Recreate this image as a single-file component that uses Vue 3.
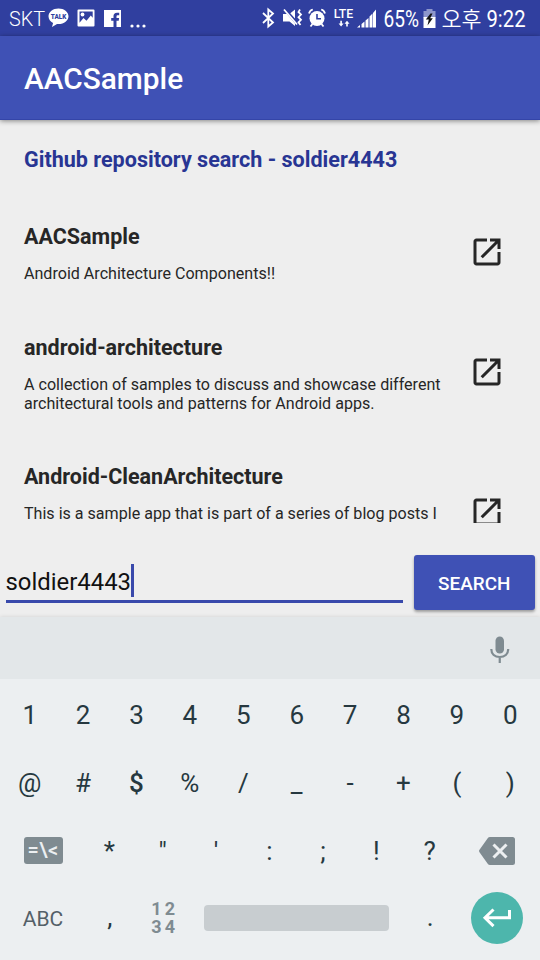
<script setup>
import { ref } from 'vue'

const query = ref('soldier4443')
const repos = [
  { name: 'AACSample', lines: ['Android Architecture Components!!'], size: 'one' },
  {
    name: 'android-architecture',
    lines: ['A collection of samples to discuss and showcase different', 'architectural tools and patterns for Android apps.'],
    size: 'two',
  },
  { name: 'Android-CleanArchitecture', lines: ['This is a sample app that is part of a series of blog posts I'], size: 'three' },
]
const digits = ['1', '2', '3', '4', '5', '6', '7', '8', '9', '0']
const symbols = ['@', '#', '$', '%', '/', '_', '-', '+', '(', ')']
const marks = ['*', '"', "'", ':', ';', '!', '?']
</script>

<template>
  <div class="screen">
    <header class="status">
      <svg class="carrier" width="38" height="36"><text x="0" y="25.5" font-size="21" textLength="36" lengthAdjust="spacingAndGlyphs">SKT</text></svg>
      <svg class="talk" width="21" height="20" viewBox="0 0 21 20">
        <path fill="#fff" d="M10.500 .5C4.900.5.500 4 .500 8.300c0 2.900 1.800 5.300 4.600 6.700L4 19l5-3 1.500.1c5.600 0 10-3.500 10-7.800S16.100.5 10.500.5z" />
        <text x="2.800" y="11.200" font-size="7.500" textLength="15.500" lengthAdjust="spacingAndGlyphs">TALK</text>
      </svg>
      <svg class="photo" width="18" height="18" viewBox="0 0 18 18">
        <path fill="#fff" fill-rule="evenodd" d="M1.500.5h15a1 1 0 0 1 1 1v15a1 1 0 0 1-1 1h-15a1 1 0 0 1-1-1v-15a1 1 0 0 1 1-1zM2.500 2.500v11.300L6.500 9l3 2.800 4.300-5.300 1.900 2.200V2.500z" />
        <circle cx="5.500" cy="5.500" r="1.900" fill="#fff" />
      </svg>
      <svg class="facebook" width="17" height="17" viewBox="0 0 17 17">
        <path fill="#fff" d="M0 0h17v17h-4.500v-6.300h2.200l.4-2.700h-2.600V6.400c0-.8.4-1.200 1.300-1.200h1.400V2.700h-2.200C10.700 2.700 9.500 4 9.500 6v2H7.200v2.700h2.300V17H0z" />
      </svg>
      <svg class="dots" width="16" height="4" viewBox="0 0 16 4"><g fill="#fff"><circle cx="2" cy="2" r="1.600" /><circle cx="8" cy="2" r="1.600" /><circle cx="14" cy="2" r="1.600" /></g></svg>
      <svg class="bluetooth" width="13" height="20" viewBox="0 0 13 20">
        <path fill="none" stroke="#fff" stroke-width="1.800" d="M1 5l10 9.500-4.700 4V1.500l4.700 4L1 15" />
      </svg>
      <svg class="mute" width="20" height="20" viewBox="0 0 20 20">
        <path fill="#fff" d="M0 6h4l8 9.500V18L6.500 13.500H0zM12 1.500v9L7.300 5.300z" />
        <path fill="none" stroke="#fff" stroke-width="1.800" d="M1 1.500l13 15M17 1.500l-1.500 2.500 2.500 2.500-2.500 2.700 2.500 2.600-2.500 2.600 2 2.600" />
      </svg>
      <svg class="alarm" width="18" height="20" viewBox="0 0 18 20">
        <circle cx="9" cy="10.500" r="7.500" fill="#fff" />
        <path fill="none" stroke="#fff" stroke-width="1.800" d="M1 5.500C1.500 3.500 2.800 2 4.800 1.500M17 5.500C16.500 3.500 15.200 2 13.200 1.500M4.500 16l-2 2.500M13.500 16l2 2.500" />
        <path fill="none" stroke="#303f9f" stroke-width="1.600" d="M9 6v4.800h4" />
      </svg>
      <svg class="lte" width="20" height="20" viewBox="0 0 20 20">
        <text x="-.3" y="10.300" font-size="12" textLength="19.500" lengthAdjust="spacingAndGlyphs">LTE</text>
        <path fill="#fff" d="M6.300 12.700h1.600v2.800h1.700L7.100 18.500l-2.500-3h1.700zM12.200 18.500h1.600v-2.800h1.700L13 12.700l-2.500 3h1.700z" />
      </svg>
      <svg class="signal" width="20" height="19" viewBox="0 0 20 19">
        <path fill="#fff" d="M0 18.500L3 16v2.500zM4.500 15l3-2.500v6h-3zM8.500 11.500l3-2.500v9.500h-3zM12.500 7.500l3-3v14h-3zM16 4l3-3.500v18h-3z" />
      </svg>
      <svg class="percent" width="38" height="36"><text x="0.500" y="26.800" font-size="23" textLength="35.500" lengthAdjust="spacingAndGlyphs">65%</text></svg>
      <svg class="battery" width="13" height="19" viewBox="0 0 13 19">
        <path fill="#8e97cb" d="M3.500 0h6v2h3v7H.500V2h3z" />
        <path fill="#fff" d="M.500 8h12v11H.500z" />
        <path fill="#111" d="M7.500 4.500L2.800 10.500h3l-1.300 6 5.300-7.200H7.200l2.300-4.800z" />
      </svg>
      <svg class="meridiem" width="42" height="36"><text x="0.500" y="26.500" font-size="22" textLength="40" lengthAdjust="spacingAndGlyphs">오후</text></svg>
      <svg class="clock" width="42" height="36"><text x="0.500" y="26.800" font-size="23" textLength="39" lengthAdjust="spacingAndGlyphs">9:22</text></svg>
    </header>

    <div class="toolbar"><h1>AACSample</h1></div>

    <main class="content">
      <h2 class="heading">Github repository search - soldier4443</h2>
      <div v-for="repo in repos" :key="repo.name" class="repo" :class="repo.size">
        <div class="info">
          <h3>{{ repo.name }}</h3>
          <p><span v-for="line in repo.lines" :key="line">{{ line }}</span></p>
        </div>
        <svg class="open" width="36" height="36" viewBox="0 0 24 24">
          <path fill="#262626" d="M19 19H5V5h7V3H5c-1.110 0-2 .9-2 2v14c0 1.100.89 2 2 2h14c1.100 0 2-.9 2-2v-7h-2v7zM14 3v2h3.590l-9.830 9.830 1.410 1.410L19 6.410V10h2V3h-7z" />
        </svg>
      </div>
    </main>

    <div class="search">
      <div class="field"><span class="value">{{ query }}</span><i class="caret"></i></div>
      <button class="submit">SEARCH</button>
    </div>

    <section class="keyboard">
      <div class="strip">
        <svg width="20" height="28" viewBox="0 0 20 28">
          <rect x="5.500" y="0.500" width="8.500" height="17" rx="4.250" fill="#7f8b91" />
          <path fill="none" stroke="#7f8b91" stroke-width="2.200" d="M1.300 13c0 5 3.500 8 8.450 8s8.450-3 8.450-8M9.750 21v6" />
        </svg>
      </div>
      <div class="keys">
        <div class="row">
          <span v-for="k in digits" :key="k" class="key digit">{{ k }}</span>
        </div>
        <div class="row">
          <span v-for="k in symbols" :key="k" class="key" :class="{ dollar: k === '$' }">{{ k }}</span>
        </div>
        <div class="row">
          <span class="key wide"><b class="more">=\&lt;</b></span>
          <span v-for="k in marks" :key="k" class="key mark">{{ k }}</span>
          <span class="key wide">
            <svg class="erase" width="36" height="28" viewBox="0 0 36 28">
              <path fill="#7f8b91" d="M11 0h22.500A2.500 2.500 0 0 1 36 2.500v23a2.500 2.500 0 0 1-2.500 2.500H11a3 3 0 0 1-2.300-1.200L.500 15.200a2 2 0 0 1 0-2.400L8.700 1.200A3 3 0 0 1 11 0z" />
              <path fill="none" stroke="#eceff1" stroke-width="3" d="M14.500 7.500l13 13M27.500 7.500l-13 13" />
            </svg>
          </span>
        </div>
        <div class="row">
          <span class="key wide abc">ABC</span>
          <span class="key low">,</span>
          <span class="key numpad"><b>12</b><b>34</b></span>
          <span class="key space"><i></i></span>
          <span class="key low">.</span>
          <span class="key wide">
            <i class="enter">
              <svg width="30" height="20" viewBox="0 0 30 20">
                <path fill="none" stroke="#fff" stroke-width="3" d="M27.500 2v7.800H3.500M11.500 1.500L3 9.800l8.500 8.300" />
              </svg>
            </i>
          </span>
        </div>
      </div>
    </section>
  </div>
</template>

<style>
body {
  background: #eeeeee;
}
</style>

<style scoped>
.screen {
  width: 540px;
  height: 960px;
  display: flex;
  flex-direction: column;
  overflow: hidden;
  background: #eeeeee;
  font-family: Roboto, "Noto Sans CJK KR", sans-serif;
}
h1, h2, h3, p {
  margin: 0;
}
.status {
  flex: none;
  height: 36px;
  padding-left: 9px;
  display: flex;
  align-items: center;
  background: #303f9f;
}
.status svg {
  flex: none;
  overflow: visible;
}
.status text {
  fill: #fff;
  font-weight: 400;
}
.status .carrier text,
.status .meridiem text {
  font-weight: 350;
}
.status .lte text {
  font-weight: 500;
}
.status .talk text {
  fill: #303f9f;
  font-weight: 900;
}
.talk { margin-left: 1px; }
.photo { margin-left: 7.5px; }
.facebook { margin-left: 9.5px; }
.dots { margin: 15px 0 0 9px; }
.bluetooth { margin-left: 116px; }
.mute { margin-left: 8px; }
.alarm { margin-left: 5px; }
.lte { margin-left: 8px; }
.signal { margin-left: 3px; }
.percent { margin-left: 6px; }
.battery { margin-left: 2px; }
.meridiem { margin-left: 5px; }
.clock { margin-left: 3px; }
.toolbar {
  position: relative;
  z-index: 1;
  flex: none;
  height: 84px;
  padding: 1px 24px 0;
  box-sizing: border-box;
  display: flex;
  align-items: center;
  background: #3f51b5;
  border-bottom: 1px solid #3445a8;
  box-shadow: 0 1px 5px rgba(0, 0, 0, 0.45);
}
.toolbar h1 {
  color: #fff;
  font-size: 29.8px;
  font-weight: 500;
}
.content {
  flex: none;
  height: 402.7px;
  overflow: hidden;
}
.heading {
  height: 77px;
  padding: 0 24px;
  line-height: 79px;
  font-size: 21.55px;
  font-weight: 700;
  color: #283593;
}
.repo {
  display: flex;
  justify-content: space-between;
  align-items: center;
  padding: 0 35.5px 0 24px;
}
.repo.one { height: 110.5px; }
.repo.two { height: 129.5px; }
.repo.three { height: 149px; }
.info {
  align-self: flex-start;
  padding-top: 27px;
}
.info h3 {
  font-size: 21.5px;
  line-height: 26px;
  font-weight: 700;
  color: #262626;
}
.info p {
  margin-top: 14px;
  font-size: 16.08px;
  line-height: 19.3px;
  color: #262626;
}
.info span {
  display: block;
  white-space: nowrap;
}
.open {
  flex: none;
}
.search {
  flex: none;
  height: 94px;
  padding: 32.3px 5.5px 0;
  box-sizing: border-box;
  display: flex;
  align-items: flex-start;
  justify-content: space-between;
}
.field {
  width: 397.5px;
  height: 48.3px;
  box-sizing: border-box;
  border-bottom: 3px solid #3949ab;
  display: flex;
  padding-top: 9px;
}
.value {
  font-size: 23.9px;
  line-height: 36px;
  color: #111;
}
.caret {
  width: 2.5px;
  height: 33px;
  background: #3949ab;
}
.submit {
  width: 120.5px;
  height: 55px;
  padding: 2px 0 0;
  border: 0;
  border-radius: 3px;
  background: #3f51b5;
  box-shadow: 0 2px 3px rgba(0, 0, 0, 0.35);
  color: #fff;
  font: 500 18.9px Roboto, sans-serif;
}
.keyboard {
  flex: 1;
  background: #eceff1;
  box-shadow: 0 0 4px rgba(0, 0, 0, 0.12);
}
.strip {
  height: 62px;
  padding-right: 30px;
  display: flex;
  align-items: center;
  justify-content: flex-end;
  background: #e3e7e9;
}
.strip svg {
  margin-top: 5px;
}
.keys {
  padding: 3px 3px 0;
}
.row {
  display: grid;
  grid-template-columns: repeat(20, 1fr);
  height: 67.6px;
}
.key {
  grid-column: span 2;
  display: flex;
  align-items: center;
  justify-content: center;
  font-size: 26px;
  color: #263840;
}
.digit {
  padding-bottom: 1px;
}
.dollar {
  font-weight: 500;
}
.mark {
  padding: 1px 1px 0 0;
}
.wide {
  grid-column: span 3;
}
.more {
  width: 39px;
  height: 27px;
  border-radius: 3px;
  background: #7f8b91;
  color: #eceff1;
  font-size: 20px;
  font-weight: 500;
  line-height: 27px;
  text-align: center;
  letter-spacing: 0.5px;
}
.abc {
  font-size: 21px;
  padding-top: 1px;
  color: #546068;
}
.low {
  padding-bottom: 2px;
}
.numpad {
  flex-direction: column;
  font-size: 18px;
  line-height: 18px;
  letter-spacing: 3px;
  padding-left: 3px;
  color: #7f8b91;
}
.space {
  grid-column: span 8;
}
.space i {
  width: 185px;
  height: 26px;
  margin-right: 1px;
  border-radius: 4px;
  background: #c8cdd0;
}
.enter {
  width: 52px;
  height: 52px;
  border-radius: 50%;
  background: #4db6ac;
  display: flex;
  align-items: center;
  justify-content: center;
}
</style>
